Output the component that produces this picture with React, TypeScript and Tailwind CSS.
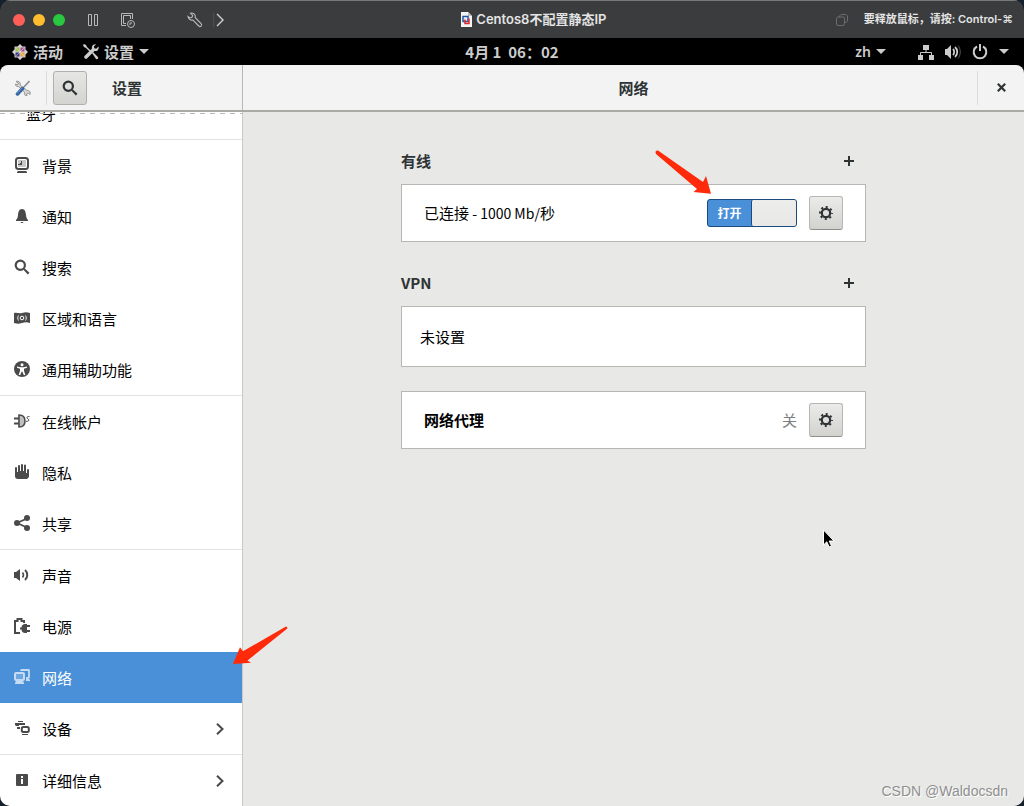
import { useState, type ReactNode } from "react";

const icons: Record<string, ReactNode> = {
  background: (
    <>
      <rect x="2" y="1" width="12" height="11" rx="2.500" fill="none" stroke="currentColor" strokeWidth="2" />
      <path d="M4 3h8v7H4z" opacity=".3" />
      <path d="M7 4h1v4H4V7h2V6h1z" />
      <path d="M4 14h8l1 1v1H3v-1z" />
    </>
  ),
  bell: <path d="M8 1C5 1 4.300 4 4 7c-.3 3-1 4-2 5v1h12v-1c-1-1-1.700-2-2-5-.3-3-1-6-4-6zM6.500 14a1.500 1 0 0 0 3 0z" />,
  search: (
    <>
      <circle cx="6.300" cy="6.300" r="4.600" fill="none" stroke="currentColor" strokeWidth="2.200" />
      <path d="M9.200 10.600l1.400-1.400 4.900 4.500-1.700 1.700z" />
    </>
  ),
  region: (
    <>
      <path d="M0 3c3-1 5 1 8 0s5-1 8 0v10c-3-1-5-1-8 0s-5 1-8 0z" />
      <circle cx="8" cy="8" r="1.800" fill="none" stroke="#fff" strokeWidth="1" />
      <path d="M4.500 5.500c-1 1.500-1 3.500 0 5M11.500 5.500c1 1.500 1 3.500 0 5" fill="none" stroke="#fff" strokeWidth=".9" />
    </>
  ),
  access: (
    <>
      <circle cx="8" cy="8" r="8" />
      <circle cx="8" cy="3.700" r="1.500" fill="#fff" />
      <path d="M3 5.500l3.500.8h3L13 5.500v1.300l-3 1V10l1.400 4H9.800L8.300 10.500h-.6L6.200 14H4.600L6 10V7.800l-3-1z" fill="#fff" />
    </>
  ),
  accounts: (
    <>
      <path d="M4 2h2c3 0 5 2.500 5 6s-2 6-5 6H4z" opacity=".35" />
      <path d="M5 2c4 0 6 2.500 6 6s-2 6-6 6z" fill="none" stroke="currentColor" strokeWidth="1.500" />
      <path d="M0 4.500h5v2H0zM0 9.500h5v2H0z" />
      <path d="M15.500 3.500h-1.200c-1.600 0-1.600 2-.4 2.300 1.300.3 1.300 2.500-.4 2.500H12" fill="none" stroke="currentColor" />
    </>
  ),
  hand: <path d="M1 4a1 1 0 0 1 2 0v4h1V2a1 1 0 0 1 2 0v5h1V1a1 1 0 0 1 2 0v6h1V1.500a1 1 0 0 1 2 0V9h1V6a1 1 0 0 1 2 0v7l-2 2H4c-2 0-3-1-3-3z" />,
  share: (
    <>
      <path d="M13 3.500L3 8l10 4.500" fill="none" stroke="currentColor" strokeWidth="1.800" />
      <circle cx="3" cy="8" r="3" />
      <circle cx="13" cy="3" r="3" />
      <circle cx="13" cy="13" r="3" />
    </>
  ),
  sound: (
    <>
      <path d="M0 5h2l4-3v12l-4-3H0z" />
      <path d="M8.500 5.500c1.200 1.500 1.200 3.500 0 5" fill="none" stroke="currentColor" strokeWidth="1.500" />
      <path d="M11 3c3 2.500 3 7.500 0 10" fill="none" stroke="currentColor" strokeWidth="2" />
    </>
  ),
  power: (
    <>
      <path d="M6 15H1V3h2.500V1h4v2H10v2" fill="none" stroke="currentColor" strokeWidth="2" />
      <path d="M13 6v9h-2c-2 0-3.500-1.500-3.500-3.500H6v-2h1.500C7.500 7.500 9 6 11 6zM13 7h3v2h-3zM13 12h3v2h-3z" />
    </>
  ),
  network: (
    <>
      <path d="M7 2V1.500c0-.3.200-.5.500-.5h7c.3 0 .5.200.5.500V8c0 .6-.4 1-1 1h-2" fill="none" stroke="currentColor" strokeWidth="1.800" />
      <path d="M2 5h7v5H2z" opacity=".3" />
      <rect x="1" y="4" width="9" height="7" rx="1" fill="none" stroke="currentColor" strokeWidth="2" />
      <path d="M2 12h7l1 2v1H1v-1zM12 10h3l1 1v1h-4z" />
    </>
  ),
  devices: (
    <>
      <path d="M4 1h5v1H4zM1 3h10v2H5v1H2L1 5zM3 7h3v2H3zM8 14h6v1H8z" />
      <rect x="7.800" y="7" width="7" height="5" rx="1.500" fill="none" stroke="currentColor" strokeWidth="2" />
    </>
  ),
  info: (
    <>
      <rect x="2" y="2" width="12" height="12" rx="1" />
      <path d="M7 4h2v2H7zM7 7h2v5H7z" fill="#fff" />
    </>
  ),
};

function Icon({ name, className = "size-4" }: { name: string; className?: string }) {
  return (
    <svg viewBox="0 0 16 16" fill="currentColor" className={className} aria-hidden="true">
      {icons[name]}
    </svg>
  );
}

const groups = [
  [
    { icon: "background", label: "背景" },
    { icon: "bell", label: "通知" },
    { icon: "search", label: "搜索" },
    { icon: "region", label: "区域和语言" },
    { icon: "access", label: "通用辅助功能" },
  ],
  [
    { icon: "accounts", label: "在线帐户" },
    { icon: "hand", label: "隐私" },
    { icon: "share", label: "共享" },
  ],
  [
    { icon: "sound", label: "声音" },
    { icon: "power", label: "电源" },
    { icon: "network", label: "网络" },
    { icon: "devices", label: "设备", more: true },
  ],
  [{ icon: "info", label: "详细信息", more: true }],
];

function Caret() {
  return (
    <svg viewBox="0 0 10 5" fill="currentColor" className="h-[5px] w-[10px]" aria-hidden="true">
      <path d="M0 0h10L5 5z" />
    </svg>
  );
}

function TitleBar() {
  return (
    <div className="flex h-[38px] items-center border-t border-[#77797b] bg-[#3a3c3e] font-['Inter','Noto_Sans_CJK_SC',sans-serif] text-[#e4e4e4]">
      <div className="flex w-[243px] items-center pl-[13px]">
        <div className="flex gap-2">
          <button aria-label="关闭窗口" className="size-3 rounded-full bg-[#ff5f57]" />
          <button aria-label="最小化" className="size-3 rounded-full bg-[#febc2e]" />
          <button aria-label="全屏" className="size-3 rounded-full bg-[#28c840]" />
        </div>
        <button aria-label="暂停" className="ml-[22px] text-[#b8b9ba]">
          <svg viewBox="0 0 12 14" className="h-[14px] w-3" fill="none" stroke="currentColor">
            <path d="M1.500 1.500h3v11h-3zM7.500 1.500h3v11h-3z" />
          </svg>
        </button>
        <button aria-label="快照" className="ml-[21px] text-[#b8b9ba]">
          <svg viewBox="0 0 16 16" className="size-4" fill="none" stroke="currentColor">
            <path d="M6 13.500H1.500v-12h11V7" />
            <path d="M6 11.500H3.500v-8h7V7" />
            <circle cx="11" cy="12" r="3.500" />
            <path d="M11 10v2H9" />
          </svg>
        </button>
        <button aria-label="虚拟机设置" className="ml-[51px] text-[#b8b9ba]">
          <svg viewBox="0 0 16 16" className="size-4" fill="none" stroke="currentColor" strokeWidth="1.100">
            <path d="M3.500 1.300C5.500.5 8 1.500 8.300 4l-.2 1.500 6 6.200c1.500 1.700-.7 3.800-2.300 2.300L6 8C3.800 8.600 1.300 7.200 1 4.500L3 6l2-.7.700-2z" />
          </svg>
        </button>
        <button aria-label="更多" className="ml-[10px] border-l border-[#4c4e50] pl-[2px] text-[#d0d0d0]">
          <svg viewBox="0 0 8 14" className="h-[14px] w-2" fill="none" stroke="currentColor" strokeWidth="1.400">
            <path d="M1 1l6 6-6 6" />
          </svg>
        </button>
      </div>
      <div className="flex flex-1 items-center justify-center gap-1 text-[13px] font-semibold whitespace-nowrap">
        <svg viewBox="0 0 12 15" className="h-[15px] w-3" aria-hidden="true">
          <path d="M1 0h7l4 4v11H1z" fill="#f4f4f4" />
          <path d="M8 0v4h4z" fill="#bbb" />
          <rect x="3" y="4.500" width="5" height="5" fill="none" stroke="#2456a8" strokeWidth="1.500" />
          <path d="M5 7.500v4h4v-5" fill="none" stroke="#e02828" strokeWidth="1.500" />
        </svg>
        Centos8不配置静态IP
      </div>
      <div className="flex items-center gap-4 pr-[11px] pl-3 text-[11px] font-semibold whitespace-nowrap">
        <svg viewBox="0 0 12 12" className="size-3 text-[#6a6c6e]" fill="none" stroke="currentColor" aria-hidden="true">
          <path d="M3.500 3V2L5 .5h5L11.500 2v5L10 8.500H9" />
          <rect x=".5" y="3" width="8" height="8.500" rx="1.500" />
        </svg>
        要释放鼠标，请按: Control-⌘
      </div>
    </div>
  );
}

function TopBar() {
  return (
    <div className="grid h-[27px] grid-cols-[1fr_auto_1fr] items-center bg-black px-3 text-[15px] leading-[27px] font-bold text-[#ccc]">
      <div className="flex items-center gap-5">
        <button className="flex items-center gap-[5px]">
          <svg viewBox="0 0 16 16" className="size-4" aria-hidden="true">
            <path d="M8 0l2.500 2.500h3v3L16 8l-2.500 2.500v3h-3L8 16l-2.500-2.500h-3v-3L0 8l2.500-2.500v-3h3z" fill="#d8cfd8" />
            <path d="M3.500 3.500h4v4h-4z" fill="#9cbf4a" />
            <path d="M8.500 3.500h4v4h-4z" fill="#a8548c" />
            <path d="M3.500 8.500h4v4h-4z" fill="#39387c" />
            <path d="M8.500 8.500h4v4h-4z" fill="#e9a63a" />
            <path d="M4 4l8 8M12 4l-8 8" stroke="#eee" strokeWidth=".5" />
          </svg>
          活动
        </button>
        <button className="flex items-center gap-[5px]">
          <svg viewBox="0 0 16 16" className="size-4" fill="currentColor" aria-hidden="true">
            <path d="M1 0l2 1 1 2 4 4-1 1-4-4-2-1L0 1zM9 9l1-1 5 5c1 1.500-1 3-2 2z" />
            <path d="M15.500 2.500l-2.300 2.200-1.900-.4-.4-1.800L13 .3C10.500-.3 8.300 1.800 9 4.500L1.500 12c-1.200 1.500 1 3.800 2.500 2.500L11.500 7c2.700.7 4.800-1.800 4-4.500z" />
          </svg>
          设置
          <Caret />
        </button>
      </div>
      <time className="whitespace-pre">{"4月 1  06：02"}</time>
      <div className="flex items-center justify-end">
        <button className="flex items-center gap-[5px] font-['Noto_Sans','Noto_Sans_CJK_SC',sans-serif] text-[14px] font-semibold">
          zh
          <Caret />
        </button>
        <button aria-label="系统菜单" className="ml-8 flex items-center gap-[11px] pr-[3px]">
          <svg viewBox="0 0 16 16" className="size-4" fill="currentColor">
            <path d="M5 1h6v5H5zM0 11h5v5H0zM11 11h5v5h-5z" />
            <path d="M8 6v3M2.500 11V8.500h11V11" fill="none" stroke="currentColor" />
          </svg>
          <svg viewBox="0 0 16 16" className="size-4" fill="currentColor">
            <path d="M0 5h2l4-4v14l-4-4H0z" />
            <path d="M8 5c1.500 1.500 1.500 4.500 0 6M10 3c3 2.500 3 7.500 0 10" fill="none" stroke="currentColor" strokeWidth="1.800" />
            <path d="M13 1.500c3 3.500 3 9.500 0 13" fill="none" stroke="currentColor" opacity=".4" />
          </svg>
          <svg viewBox="0 0 16 16" className="size-4" fill="none" stroke="currentColor" strokeWidth="2">
            <path d="M5 2.500a6.300 6.300 0 1 0 6 0M8 0v7" />
          </svg>
          <Caret />
        </button>
      </div>
    </div>
  );
}

function Header() {
  return (
    <header className="flex h-[47px] rounded-t-lg border-b-2 border-[#a9a9a5] bg-[#f3f3f3] text-[15px] font-bold text-[#2e3436]">
      <div className="flex w-[243px] items-center border-r border-[#b8b8b4]">
        <div className="flex h-[34px] w-[47px] items-center justify-center border-r border-[#dcdcda]">
          <svg viewBox="0 0 16 16" className="size-4" aria-hidden="true">
            <path d="M1 1.500C3.500.5 6 2.500 5 5l7 5.500c2.500-.5 4 2 3 4l-2-1.500-1.500 1L12 16c-2 0-3.200-1.800-2.500-3.800L3.500 6.500C1.500 7 .3 5.500.5 4l2 .7L3.500 3z" fill="#d6d6d2" stroke="#777" strokeWidth=".7" />
            <path d="M14.500 1L8 8" stroke="#888" strokeWidth="1.500" />
            <path d="M7.500 8.500L2.500 14" stroke="#3465a4" strokeWidth="3.500" strokeLinecap="round" />
            <path d="M6.500 8.500l-4 4.500" stroke="#729fcf" strokeLinecap="round" />
          </svg>
        </div>
        <button
          aria-label="搜索"
          className="ml-[6px] flex size-[34px] items-center justify-center rounded-[3px] border border-[#b0b0ac] bg-linear-to-b from-[#e6e6e4] to-[#d3d3d0]"
        >
          <Icon name="search" />
        </button>
        <h2 className="ml-[25px] pt-[2px]">设置</h2>
      </div>
      <div className="grid flex-1 grid-cols-[47px_1fr_47px] items-center">
        <h1 className="col-start-2 pt-[2px] text-center">网络</h1>
        <button aria-label="关闭" className="flex h-[34px] items-center justify-center border-l border-[#dcdcda]">
          <svg viewBox="0 0 9 9" className="size-[9px]" fill="none" stroke="currentColor" strokeWidth="2.200">
            <path d="M.8.8l7.400 7.400M8.200.8L.8 8.200" />
          </svg>
        </button>
      </div>
    </header>
  );
}

function Sidebar() {
  return (
    <nav className="relative w-[243px] shrink-0 border-r border-[#c9c9c6] bg-white text-[15px] text-black">
      {/* list is scrolled, so only the tail of the bluetooth row shows */}
      <div className="flex h-7 flex-col justify-end overflow-hidden border-b border-[#e2e2e2]">
        <a href="#bluetooth" className="flex h-[51px] shrink-0 items-center pt-[2px] pl-[26px]">
          蓝牙
        </a>
      </div>
      <div className="absolute inset-x-0 top-px h-px bg-[repeating-linear-gradient(90deg,#b9b9b7_0_5px,#fff_5px_10px)]" />
      {groups.map((group, i) => (
        <ul key={i} className="border-b border-[#e2e2e2] last:border-b-0">
          {group.map((item) => (
            <li key={item.label}>
              <a
                href={`#${item.icon}`}
                className={
                  item.label === "网络"
                    ? "flex h-[51px] items-center bg-[#4a90d9] px-[14px] text-white"
                    : "flex h-[51px] items-center px-[14px]"
                }
              >
                <span className={item.label === "网络" ? "mr-3 pb-[2px] text-[#c5dbf3]" : "mr-3 pb-[2px] text-[#4a4a4a]"}>
                  <Icon name={item.icon} />
                </span>
                <span className="pt-[2px]">{item.label}</span>
                {"more" in item && (
                  <svg viewBox="0 0 8 12" className="mr-1 ml-auto h-3 w-2 text-[#4a4a4a]" fill="none" stroke="currentColor" strokeWidth="2">
                    <path d="M1 .8L6.500 6 1 11.200" />
                  </svg>
                )}
              </a>
            </li>
          ))}
        </ul>
      ))}
    </nav>
  );
}

function SectionTitle({ title }: { title: string }) {
  return (
    <div className="mb-[11px] flex h-6 items-center justify-between pr-3 text-[15px] font-bold text-[#2e3436]">
      <h3>{title}</h3>
      <button aria-label={`添加 ${title}`}>
        <svg viewBox="0 0 10 10" className="size-[10px]" fill="currentColor">
          <path d="M4 0h2v4h4v2H6v4H4V6H0V4h4z" />
        </svg>
      </button>
    </div>
  );
}

function GearButton({ label }: { label: string }) {
  return (
    <button
      aria-label={label}
      className="flex size-[34px] items-center justify-center rounded-[3px] border border-[#b6b6b3] border-b-[#8f8f8a] bg-linear-to-b from-[#ebebea] to-[#d2d2cf] text-[#2e3436]"
    >
      <svg viewBox="0 0 14 14" className="size-[14px]" fill="none" stroke="currentColor">
        <circle cx="7" cy="7" r="4.200" strokeWidth="2.200" />
        <circle cx="7" cy="7" r="6" strokeWidth="2" strokeDasharray="2 2.712" strokeDashoffset="1" />
      </svg>
    </button>
  );
}

function WiredSwitch() {
  const [on, setOn] = useState(true);
  return (
    <label className="flex h-7 w-[90px] rounded-[3px] border border-[#1c4a7c] bg-[#4a90d9] text-[12px] font-bold text-white">
      <input type="checkbox" className="sr-only" aria-label="有线连接" checked={on} onChange={() => setOn(!on)} />
      <span className={on ? "flex flex-1 items-center justify-center" : "order-2 flex flex-1 items-center justify-center"}>
        {on ? "打开" : "关闭"}
      </span>
      <span className="w-[45px] rounded-[2px] border-l border-[#1c4a7c] bg-linear-to-b from-[#ededec] to-[#e8e8e7]" />
    </label>
  );
}

export default function App() {
  return (
    <div className="min-h-screen bg-[#14202c] font-['Noto_Sans_CJK_SC',sans-serif]">
      <div className="relative flex min-h-screen flex-col overflow-hidden rounded-[10px] bg-black">
        <TitleBar />
        <TopBar />
        <Header />
        <div className="flex flex-1">
          <Sidebar />
          <main className="flex-1 bg-[#e8e8e6] pt-[37px] text-[15px] text-black">
            <div className="mx-auto w-[465px]">
              <SectionTitle title="有线" />
              <div className="flex h-[58px] items-center border border-[#b6b6b3] bg-white px-[22px]">
                <span className="mr-auto">
                  已连接<span className="text-[14px]"> - 1000 Mb/</span>秒
                </span>
                <div className="flex items-center gap-3">
                  <WiredSwitch />
                  <GearButton label="有线选项" />
                </div>
              </div>
              <div className="h-[29px]" />
              <SectionTitle title="VPN" />
              <div className="flex h-[61px] items-center border border-[#b6b6b3] bg-white px-[18px] pt-[2px]">未设置</div>
              <div className="mt-6 flex h-[58px] items-center border border-[#b6b6b3] bg-white px-[22px]">
                <span className="mr-auto font-bold">网络代理</span>
                <div className="flex items-center gap-3">
                  <span className="text-[#7c7f80]">关</span>
                  <GearButton label="代理选项" />
                </div>
              </div>
            </div>
          </main>
        </div>

        <svg viewBox="0 0 56 44" className="absolute top-[150px] left-[655px] h-[44px] w-[56px]" fill="#ff2a0a" aria-hidden="true">
          <path d="M.5 2.500C.5 1 1.500 0 3 .6L48 32l3-6 5 17.700L38.500 42l3.500-3L1 4z" />
        </svg>
        <svg viewBox="0 0 56 39" className="absolute top-[626px] left-[232px] h-[39px] w-[56px]" fill="#ff2a0a" aria-hidden="true">
          <path d="M53.500.8c1.500-.5 2.500 1 1.500 2L15.500 34.500l3.500 2.200L1 38l7-16.800 3 4z" />
        </svg>
        <svg viewBox="0 0 13 20" className="absolute top-[529px] left-[822px] h-5 w-[13px]" aria-hidden="true">
          <path d="M1.500 1v15l3.300-3.200L7.200 18l2.300-1-2.300-5H12z" fill="#000" stroke="#fff" />
        </svg>
        <p className="absolute right-4 bottom-[6px] font-['Liberation_Sans',sans-serif] text-[14px] leading-[18px] text-[#8f8f8f] [text-shadow:1px_1px_0_#fff]">
          CSDN @Waldocsdn
        </p>
      </div>
    </div>
  );
}
